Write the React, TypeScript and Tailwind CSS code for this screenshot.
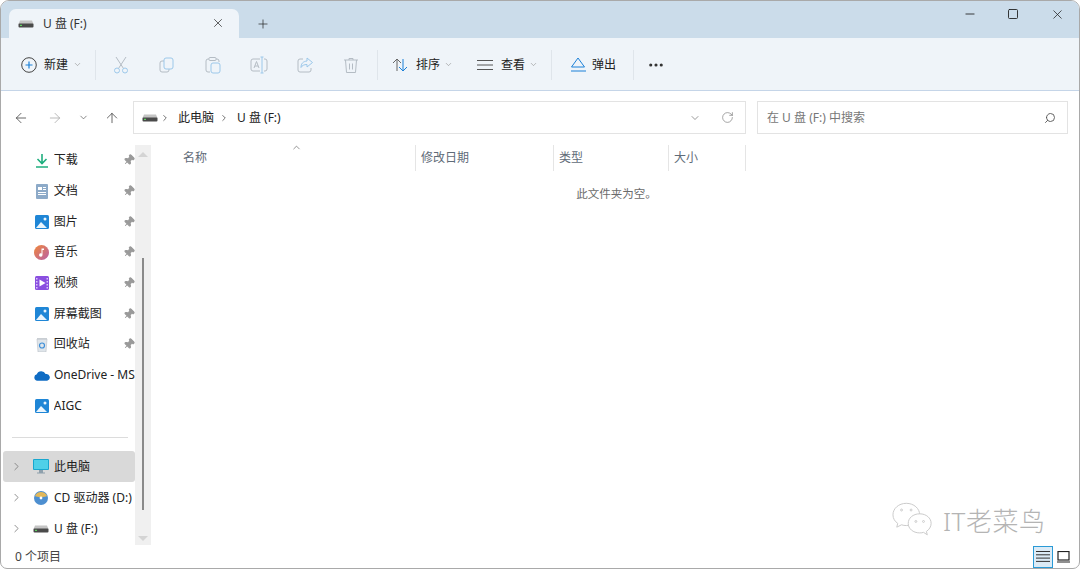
import { ChevronDown, ChevronRight, ChevronUp, ArrowLeft, ArrowRight, ArrowUp, RotateCw, Search, X, Plus, Minus, Square, Pin, MoreHorizontal } from "lucide-react";
import type { ReactNode } from "react";

function Drive({ className = "" }: { className?: string }) {
  return (
    <svg width="16" height="8" viewBox="0 0 16 8" className={className}>
      <path d="M2 0.5h12l1.5 3.5h-15z" fill="#c4c4c4" />
      <rect x="0.5" y="3.5" width="15" height="4" rx="1" fill="#4a4a4a" />
      <rect x="2" y="4.8" width="2" height="1.2" fill="#5fd35f" />
    </svg>
  );
}

function Photo() {
  return (
    <svg width="14" height="14" viewBox="0 0 14 14">
      <rect width="14" height="14" rx="1.5" fill="#1f86d6" />
      <path d="M1 13l5-6 6 6z" fill="#eaf5fd" />
      <circle cx="10" cy="4" r="1.5" fill="#eaf5fd" />
    </svg>
  );
}

function DisabledIcon({ kind }: { kind: string }) {
  const g = "#b4bcc4";
  const b = "#9cc8ea";
  return (
    <svg width="18" height="18" viewBox="0 0 18 18" fill="none" strokeWidth="1">
      {kind === "cut" && (
        <>
          <path d="M4 1l7.2 11M14 1L6.8 12" stroke={g} />
          <circle cx="5" cy="14.5" r="2.5" stroke={b} />
          <circle cx="13" cy="14.5" r="2.5" stroke={b} />
        </>
      )}
      {kind === "copy" && (
        <>
          <rect x="2" y="5" width="9" height="11" rx="2" stroke={g} />
          <rect x="6" y="2" width="9" height="11" rx="2" fill="#eff4f9" stroke={b} />
        </>
      )}
      {kind === "paste" && (
        <>
          <path d="M5 3H4a2 2 0 0 0-2 2v9a2 2 0 0 0 2 2h2M12 3h1a2 2 0 0 1 2 2v1" stroke={g} />
          <rect x="5" y="1.5" width="7" height="3" rx="1" stroke={g} />
          <rect x="7" y="7" width="9" height="10" rx="2" stroke={b} />
        </>
      )}
      {kind === "rename" && (
        <>
          <path d="M10 3H3a2 2 0 0 0-2 2v8a2 2 0 0 0 2 2h7M14 3h1a2 2 0 0 1 2 2v8a2 2 0 0 1-2 2h-1" stroke={g} />
          <path d="M4 12l2.500-6.500L9 12M5 10h3" stroke={g} />
          <path d="M12 1v16M10.500 1h3M10.500 17h3" stroke={b} />
        </>
      )}
      {kind === "share" && (
        <>
          <path d="M7 3H4a2 2 0 0 0-2 2v9a2 2 0 0 0 2 2h9a2 2 0 0 0 2-2v-2" stroke={g} />
          <path d="M11 2l5.500 4.500L11 11V8.500c-3 0-5 1-6 3 0-4 2-6 6-6.500z" stroke={b} />
        </>
      )}
      {kind === "trash" && (
        <path d="M2 4h14M7 4V2.500h4V4M3.500 4l1 12.500h9l1-12.500M7.500 7.500v6M10.500 7.500v6" stroke={g} />
      )}
    </svg>
  );
}

function Sep() {
  return <div className="h-[30px] w-px bg-[#dfe5eb]" />;
}

function SidebarRow({ icon, label, pin }: { icon: ReactNode; label: string; pin?: boolean }) {
  return (
    <div className="flex h-[30.7px] items-center pl-[31px]">
      <span className="flex w-[16px] justify-center">{icon}</span>
      <span className="ml-[4px] w-[82px] overflow-hidden whitespace-nowrap text-[12px] text-[#222]">{label}</span>
      {pin && <Pin size={12} className="-ml-[12px] rotate-45 fill-[#9a9a9a] text-[#9a9a9a]" />}
    </div>
  );
}

function DriveRow({ icon, label, selected }: { icon: ReactNode; label: string; selected?: boolean }) {
  return (
    <div className={`flex h-[31px] items-center rounded-[3px] ${selected ? "bg-[#d9d9d9]" : ""}`}>
      <ChevronRight size={13} strokeWidth={1.5} className="ml-[7px] text-[#777]" />
      <span className="ml-[9px] flex w-[18px] justify-center">{icon}</span>
      <span className="ml-[4px] whitespace-nowrap text-[12px] text-[#222]">{label}</span>
    </div>
  );
}

export default function App() {
  const cols = [
    { label: "名称", w: "w-[265px]", pl: "pl-[32px]" },
    { label: "修改日期", w: "w-[138px]", pl: "pl-[5px]" },
    { label: "类型", w: "w-[115px]", pl: "pl-[5px]" },
    { label: "大小", w: "w-[77px]", pl: "pl-[5px]" },
  ];

  return (
    <div className="relative flex h-[569px] w-[1080px] flex-col overflow-hidden rounded-t-[9px] rounded-b-[7px] border border-[#a9a9a9] bg-white font-['Noto_Sans','Noto_Sans_CJK_SC',sans-serif] text-[12px] text-[#222]">
      {/* title bar */}
      <div className="flex h-[37px] shrink-0 items-end bg-[#cbdcea] pl-[8px]">
        <div className="flex h-[29px] w-[230px] items-center rounded-t-[7px] bg-[#eff4f9] pl-[9px]">
          <Drive />
          <span className="ml-[9px] text-[12px] text-[#333]">U 盘 (F:)</span>
          <X size={14} strokeWidth={1.2} className="ml-[124px] -translate-y-px text-[#222]" />
        </div>
        <Plus size={14} strokeWidth={1.2} className="mb-[7px] ml-[17px] text-[#222]" />
        <div className="ml-auto flex h-full items-start pt-[6px] pr-[14px]">
          <Minus size={14} strokeWidth={1.5} className="mr-[30px] text-[#222]" />
          <Square size={12} strokeWidth={1.8} className="mt-px mr-[31px] text-[#222]" />
          <X size={15} strokeWidth={1.2} className="text-[#222]" />
        </div>
      </div>

      {/* toolbar */}
      <div className="flex h-[53px] shrink-0 items-center border-b border-[#c5d5e8] bg-[#eff4f9] pt-px pl-[20px]">
        <svg width="16" height="16" viewBox="0 0 16 16" fill="none">
          <circle cx="8" cy="8" r="7.3" stroke="#444" strokeWidth="1" />
          <path d="M8 4.500v7M4.500 8h7" stroke="#1b80d8" strokeWidth="1.2" />
        </svg>
        <span className="ml-[7px] text-[12px]">新建</span>
        <ChevronDown size={9} strokeWidth={1.5} className="mr-[13px] ml-[5px] text-[#888]" />
        <Sep />
        <div className="ml-[16px] flex items-center gap-[28px]">
          <DisabledIcon kind="cut" />
          <DisabledIcon kind="copy" />
          <DisabledIcon kind="paste" />
          <DisabledIcon kind="rename" />
          <DisabledIcon kind="share" />
          <DisabledIcon kind="trash" />
        </div>
        <div className="ml-[17px]">
          <Sep />
        </div>
        <svg width="16" height="14" viewBox="0 0 16 14" fill="none" className="ml-[14px]">
          <path d="M5 13V1M1 5l4-4 4 4" stroke="#666" />
          <path d="M11 1v12M7 9l4 4 4-4" stroke="#1b80d8" />
        </svg>
        <span className="ml-[8px]">排序</span>
        <ChevronDown size={9} strokeWidth={1.5} className="ml-[4px] text-[#888]" />
        <svg width="16" height="10" viewBox="0 0 16 10" fill="none" className="ml-[24px]">
          <path d="M0 .5h16M0 5h16M0 9.500h16" stroke="#555" />
        </svg>
        <span className="ml-[8px]">查看</span>
        <ChevronDown size={9} strokeWidth={1.5} className="mr-[13px] ml-[4px] text-[#888]" />
        <Sep />
        <svg width="16" height="15" viewBox="0 0 16 15" fill="none" className="ml-[18px]">
          <path d="M8 1l6.500 9h-13z" stroke="#1b80d8" />
          <path d="M1 14h15" stroke="#1b80d8" />
        </svg>
        <span className="mr-[17px] ml-[6px]">弹出</span>
        <Sep />
        <MoreHorizontal size={18} strokeWidth={2.2} className="ml-[13px] text-[#333]" />
      </div>

      {/* address row */}
      <div className="flex h-[54px] shrink-0 items-center pb-px">
        <ArrowLeft size={16} strokeWidth={1.2} className="ml-[12px] text-[#444]" />
        <ArrowRight size={16} strokeWidth={1.2} className="ml-[18px] text-[#aaa]" />
        <ChevronDown size={11} strokeWidth={1.5} className="ml-[15px] text-[#555]" />
        <ArrowUp size={16} strokeWidth={1.2} className="ml-[15px] text-[#444]" />
        <div className="ml-[13px] flex h-[33px] w-[613px] items-center border border-[#e3e3e3] pl-[8px]">
          <Drive />
          <ChevronRight size={10} strokeWidth={1.8} className="ml-[2px] text-[#444]" />
          <span className="ml-[8px]">此电脑</span>
          <ChevronRight size={10} strokeWidth={1.8} className="ml-[5px] text-[#444]" />
          <span className="ml-[8px]">U 盘 (F:)</span>
          <ChevronDown size={12} strokeWidth={1.2} className="mr-[20px] ml-auto text-[#555]" />
          <RotateCw size={13} strokeWidth={1.2} className="mr-[11px] text-[#777]" />
        </div>
        <div className="ml-[11px] flex h-[33px] w-[311px] items-center border border-[#e3e3e3] pr-[11px] pl-[9px]">
          <span className="text-[#777]">在 U 盘 (F:) 中搜索</span>
          <Search size={12} strokeWidth={1.8} className="ml-auto -scale-x-100 text-[#555]" />
        </div>
      </div>

      {/* body */}
      <div className="flex min-h-0 flex-1">
        <div className="relative flex h-[400px] w-[134px] shrink-0 flex-col pl-[2px]">
          <SidebarRow
            pin
            label="下载"
            icon={
              <svg width="14" height="15" viewBox="0 0 14 15" fill="none">
                <path d="M7 1v9M2.500 6L7 10.500 11.500 6" stroke="#1fae7e" strokeWidth="1.6" />
                <path d="M1 14h12" stroke="#1fae7e" strokeWidth="1.6" />
              </svg>
            }
          />
          <SidebarRow
            pin
            label="文档"
            icon={
              <svg width="12" height="15" viewBox="0 0 12 15">
                <rect width="12" height="15" rx="1" fill="#8daac8" />
                <path d="M2 3h4v3H2zM7 3h3v1H7zM7 5h3v1H7zM2 8h8v1H2zM2 10h8v1H2z" fill="#fff" />
              </svg>
            }
          />
          <SidebarRow pin label="图片" icon={<Photo />} />
          <SidebarRow
            pin
            label="音乐"
            icon={
              <svg width="15" height="15" viewBox="0 0 15 15">
                <defs>
                  <linearGradient id="music" x1="0" y1="0" x2="1" y2="1">
                    <stop offset="0" stopColor="#f0883a" />
                    <stop offset="1" stopColor="#b85fa8" />
                  </linearGradient>
                </defs>
                <circle cx="7.500" cy="7.500" r="7.500" fill="url(#music)" />
                <path d="M7.500 3.500h2.500v1.500H8.500v5a1.700 1.700 0 1 1-1-1.500z" fill="#fff" />
              </svg>
            }
          />
          <SidebarRow
            pin
            label="视频"
            icon={
              <svg width="14" height="14" viewBox="0 0 14 14">
                <rect width="14" height="14" rx="1.500" fill="#8a4fe0" />
                <path d="M4.500 3.500L10.500 7l-6 3.500z" fill="#fff" />
                <path d="M1 2h1.500v1.500H1zM1 5h1.500v1.500H1zM1 8h1.500v1.500H1zM1 11h1.500v1.500H1zM11.500 2H13v1.500h-1.500zM11.500 5H13v1.500h-1.500zM11.500 8H13v1.500h-1.500zM11.500 11H13v1.500h-1.500z" fill="#d9c4fa" />
              </svg>
            }
          />
          <SidebarRow pin label="屏幕截图" icon={<Photo />} />
          <SidebarRow
            pin
            label="回收站"
            icon={
              <svg width="12" height="15" viewBox="0 0 12 15">
                <path d="M1 2h10l-1 13H2z" fill="#dfe5ea" stroke="#b8bec4" strokeWidth=".6" />
                <rect x="1" y="1" width="10" height="1.500" fill="#c9ced3" />
                <circle cx="6" cy="8.500" r="2.500" fill="none" stroke="#3e8fd8" strokeWidth="1.2" />
              </svg>
            }
          />
          <SidebarRow
            label="OneDrive - MS"
            icon={
              <svg width="17" height="11" viewBox="0 0 17 11">
                <path d="M3.500 11A3.400 3.400 0 0 1 3 4.300 5 5 0 0 1 12.300 4 3.600 3.600 0 0 1 14 11z" fill="#0f6cc4" />
              </svg>
            }
          />
          <SidebarRow label="AIGC" icon={<Photo />} />
          <div className="mt-[16px] mb-[13px] ml-[9px] h-px w-[116px] shrink-0 bg-[#dcdcdc]" />
          <DriveRow
            selected
            label="此电脑"
            icon={
              <svg width="16" height="15" viewBox="0 0 16 15">
                <rect width="16" height="11" rx="1" fill="#18a7cf" />
                <rect x="1" y="1" width="14" height="9" fill="#4fd0e8" />
                <path d="M6 11h4v2.500H6zM4 13.500h8v1H4z" fill="#8ea0ac" />
              </svg>
            }
          />
          <DriveRow
            label="CD 驱动器 (D:)"
            icon={
              <svg width="14" height="14" viewBox="0 0 14 14">
                <circle cx="7" cy="7" r="7" fill="#4d8fd0" />
                <path d="M1 5a6.500 6.500 0 0 1 12 0c-2 1.500-10 1.500-12 0z" fill="#e2b85a" />
                <circle cx="7" cy="7" r="1.400" fill="#fff" />
              </svg>
            }
          />
          <DriveRow label="U 盘 (F:)" icon={<Drive />} />
        </div>

        {/* scrollbar */}
        <div className="flex h-[400px] w-[16px] shrink-0 flex-col items-center bg-[#f0f0f0] pt-[7px] pb-[4px]">
          <div className="h-0 w-0 border-x-[5px] border-b-[5px] border-x-transparent border-b-[#d4d4d4]" />
          <div className="mt-[101px] h-[252px] w-[2px] bg-[#8a8a8a]" />
          <div className="mt-auto h-0 w-0 border-x-[5px] border-t-[5px] border-x-transparent border-t-[#d4d4d4]" />
        </div>

        {/* file list */}
        <div className="relative flex-1">
          <div className="flex h-[26px]">
            {cols.map((c) => (
              <div key={c.label} className={`flex items-center border-r border-[#e5e5e5] text-[#5f6b78] ${c.w} ${c.pl}`}>
                {c.label}
              </div>
            ))}
          </div>
          <ChevronUp size={11} strokeWidth={1.5} className="absolute top-[-3px] left-[140px] text-[#666]" />
          <p className="mt-[14px] ml-[3px] w-[925px] text-center text-[11.5px] text-[#6b6b6b]">此文件夹为空。</p>
        </div>
      </div>

      {/* status bar */}
      <div className="flex h-[23px] shrink-0 items-center pl-[14px] text-[12px] text-[#444]">
        0 个项目
        <div className="ml-auto flex items-center pr-[6px]">
          <div className="flex h-[22px] w-[20px] items-center justify-center border border-[#2a9ad6] bg-[#dcebf6]">
            <svg width="14" height="11" viewBox="0 0 14 11" fill="none">
              <path d="M0 .5h14M0 3.800h14M0 7.100h14M0 10.400h14" stroke="#333" />
            </svg>
          </div>
          <div className="flex h-[22px] w-[20px] items-center justify-center">
            <svg width="13" height="12" viewBox="0 0 13 12" fill="none">
              <rect x="1" y=".5" width="11" height="8.500" stroke="#222" strokeWidth="1.200" />
              <path d="M0 11h13" stroke="#222" strokeWidth="1.200" />
            </svg>
          </div>
        </div>
      </div>

      {/* watermark */}
      <div className="absolute top-[501px] left-[891px] flex items-center">
        <svg width="42" height="37" viewBox="0 0 44 38" fill="#fff" stroke="#c8c8c8" strokeWidth="1">
          <path d="M15 1C7 1 1 6.500 1 13c0 4 2 7 5 9l-1 4 5-2.500c2 .6 3 .8 5 .8 8 0 14-5.500 14-11.300C29 6.500 23 1 15 1z" />
          <path d="M29 12c-7 0-12 4.500-12 10s5 10 12 10c1.500 0 3-.2 4-.6l4 2.600-1-3.500c3-2 5-5 5-8.500 0-5.500-5-10-12-10z" />
          <circle cx="10" cy="8" r="1" />
          <circle cx="20" cy="8" r="1" />
          <circle cx="25" cy="20" r="1" />
          <circle cx="33" cy="20" r="1" />
        </svg>
        <span className="ml-[9px] text-[26px] leading-none font-light tracking-[0.5px] text-[#b4b4b4]">IT老菜鸟</span>
      </div>
    </div>
  );
}
